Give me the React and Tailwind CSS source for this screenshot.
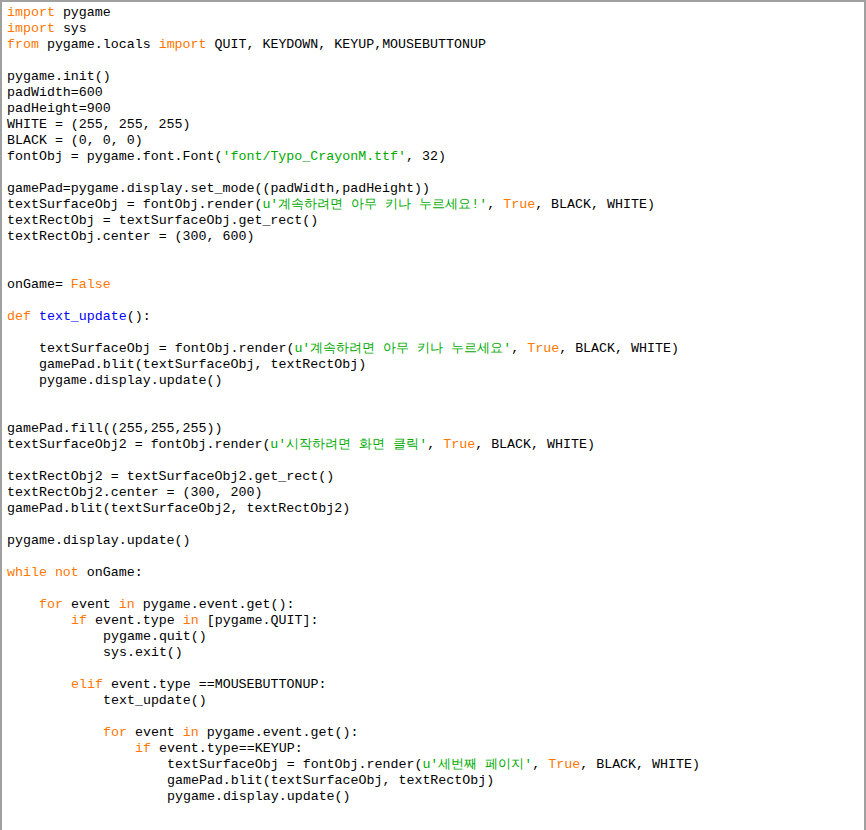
const code = `import pygame
import sys
from pygame.locals import QUIT, KEYDOWN, KEYUP,MOUSEBUTTONUP

pygame.init()
padWidth=600
padHeight=900
WHITE = (255, 255, 255)
BLACK = (0, 0, 0)
fontObj = pygame.font.Font('font/Typo_CrayonM.ttf', 32)

gamePad=pygame.display.set_mode((padWidth,padHeight))
textSurfaceObj = fontObj.render(u'계속하려면 아무 키나 누르세요!', True, BLACK, WHITE)
textRectObj = textSurfaceObj.get_rect()
textRectObj.center = (300, 600)


onGame= False

def text_update():

    textSurfaceObj = fontObj.render(u'계속하려면 아무 키나 누르세요', True, BLACK, WHITE)
    gamePad.blit(textSurfaceObj, textRectObj)
    pygame.display.update()


gamePad.fill((255,255,255))
textSurfaceObj2 = fontObj.render(u'시작하려면 화면 클릭', True, BLACK, WHITE)

textRectObj2 = textSurfaceObj2.get_rect()
textRectObj2.center = (300, 200)
gamePad.blit(textSurfaceObj2, textRectObj2)

pygame.display.update()

while not onGame:

    for event in pygame.event.get():
        if event.type in [pygame.QUIT]:
            pygame.quit()
            sys.exit()

        elif event.type ==MOUSEBUTTONUP:
            text_update()

            for event in pygame.event.get():
                if event.type==KEYUP:
                    textSurfaceObj = fontObj.render(u'세번째 페이지', True, BLACK, WHITE)
                    gamePad.blit(textSurfaceObj, textRectObj)
                    pygame.display.update()`;

const KW = new Set(['import', 'from', 'def', 'while', 'not', 'in', 'if', 'elif', 'for', 'True', 'False']);
const indents = ['pl-0', 'pl-8', 'pl-16', 'pl-24', 'pl-32', 'pl-40'];

function tokens(text) {
  const out = [];
  const re = /(u?'[^']*')|([A-Za-z_]+)|([^A-Za-z_']+)/g;
  let m;
  let afterDef = false;
  while ((m = re.exec(text))) {
    if (m[1]) out.push(['text-[#00aa00]', m[1]]);
    else if (m[2]) {
      if (afterDef) { out.push(['text-[#0000ff]', m[2]]); afterDef = false; }
      else if (KW.has(m[2])) { out.push(['text-[#ff7700]', m[2]]); afterDef = m[2] === 'def'; }
      else out.push(['text-black', m[2]]);
    } else out.push(['text-black', m[3]]);
  }
  return out;
}

export default function App() {
  return (
    <div className="w-[866px] h-[830px] bg-white border-x-2 border-t-2 border-[#a0a0a0] overflow-hidden pt-[3px] pl-[5px]">
      <pre className="font-['Liberation_Sans','Noto_Sans_CJK_KR',sans-serif] text-[13.3px] leading-4 whitespace-pre">
        {code.split('\n').map((line, i) => {
          const lead = line.match(/^ */)[0].length;
          return (
            <div key={i} className={`h-4 ${indents[lead / 4]}`}>
              {tokens(line.trimStart()).map(([c, t], j) => (
                <span key={j} className={c}>{t}</span>
              ))}
            </div>
          );
        })}
      </pre>
    </div>
  );
}
